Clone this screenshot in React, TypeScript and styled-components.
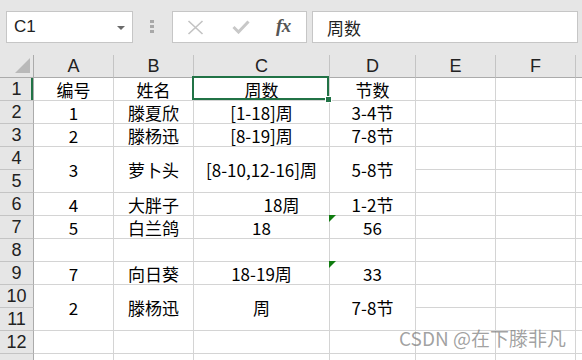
import React from 'react';
import styled, { createGlobalStyle } from 'styled-components';

type Cell = {
  text?: string;
  span?: number;
  shift?: number;
  flag?: boolean;
  selected?: boolean;
};

type Row = {
  label: string;
  cells: Cell[];
  active?: boolean;
};

const COLUMNS = ['A', 'B', 'C', 'D', 'E', 'F', ''];

const ROWS: Row[] = [
  { label: '1', active: true, cells: [{ text: '编号' }, { text: '姓名' }, { text: '周数', selected: true }, { text: '节数' }, {}, {}, {}] },
  { label: '2', cells: [{ text: '1' }, { text: '滕夏欣' }, { text: '[1-18]周' }, { text: '3-4节' }, {}, {}, {}] },
  { label: '3', cells: [{ text: '2' }, { text: '滕杨迅' }, { text: '[8-19]周' }, { text: '7-8节' }, {}, {}, {}] },
  { label: '4', cells: [{ text: '3', span: 2 }, { text: '萝卜头', span: 2 }, { text: '[8-10,12-16]周', span: 2 }, { text: '5-8节', span: 2 }, {}, {}, {}] },
  { label: '5', cells: [{}, {}, {}] },
  { label: '6', cells: [{ text: '4' }, { text: '大胖子' }, { text: '18周', shift: 40 }, { text: '1-2节' }, {}, {}, {}] },
  { label: '7', cells: [{ text: '5' }, { text: '白兰鸽' }, { text: '18' }, { text: '56', flag: true }, {}, {}, {}] },
  { label: '8', cells: [{}, {}, {}, {}, {}, {}, {}] },
  { label: '9', cells: [{ text: '7' }, { text: '向日葵' }, { text: '18-19周' }, { text: '33', flag: true }, {}, {}, {}] },
  { label: '10', cells: [{ text: '2', span: 2 }, { text: '滕杨迅', span: 2 }, { text: '周', span: 2 }, { text: '7-8节', span: 2 }, {}, {}, {}] },
  { label: '11', cells: [{}, {}, {}] },
  { label: '12', cells: [{}, {}, {}, {}, {}, {}, {}] },
  { label: '', cells: [{}, {}, {}, {}, {}, {}, {}] },
];

const GlobalStyle = createGlobalStyle`
  html, body {
    margin: 0;
    padding: 0;
    background: #ffffff;
  }
`;

export default function App() {
  return (
    <Page>
      <GlobalStyle />
      <Toolbar>
        <NameBox>
          <span>C1</span>
          <DropArrow />
        </NameBox>
        <Grip>
          <i />
          <i />
          <i />
        </Grip>
        <FormulaButtons>
          <svg width="17" height="15" viewBox="0 0 17 15">
            <path d="M1.5 1 L15.5 14 M15.5 1 L1.5 14" stroke="#c3c3c3" strokeWidth="1.6" fill="none" />
          </svg>
          <svg width="18" height="14" viewBox="0 0 18 14">
            <path d="M1.5 7 L6.5 12 L16.5 1.5" stroke="#c8c8c8" strokeWidth="3" fill="none" />
          </svg>
          <Fx>fx</Fx>
        </FormulaButtons>
        <FormulaInput>周数</FormulaInput>
      </Toolbar>

      <Sheet>
        <Corner />
        {COLUMNS.map((c, i) => (
          <ColHeader key={i} $last={i === COLUMNS.length - 1}>{c}</ColHeader>
        ))}
        {ROWS.map((row, r) => (
          <React.Fragment key={r}>
            <RowHeader $active={row.active}>{row.label}</RowHeader>
            {row.cells.map((cell, c) => (
              <DataCell
                key={c}
                $span={cell.span}
                $shift={cell.shift}
                $flag={cell.flag}
                $selected={cell.selected}
                $last={c === row.cells.length - 1}
              >
                {cell.text}
              </DataCell>
            ))}
          </React.Fragment>
        ))}
      </Sheet>

      <Watermark>CSDN @在下滕非凡</Watermark>
    </Page>
  );
}

const Page = styled.div`
  position: relative;
  width: 582px;
  height: 360px;
  overflow: hidden;
  background: #ffffff;
`;

const Toolbar = styled.div`
  height: 55px;
  box-sizing: border-box;
  display: flex;
  align-items: flex-start;
  padding: 11px 4px 0 6px;
  background: #e6e6e6;
`;

const NameBox = styled.div`
  width: 127px;
  height: 32px;
  box-sizing: border-box;
  display: flex;
  align-items: center;
  justify-content: space-between;
  padding: 0 7px 0 7px;
  background: #ffffff;
  border: 1px solid #c6c6c6;
  font: 17px 'Liberation Sans', sans-serif;
  color: #222222;
`;

const DropArrow = styled.span`
  width: 0;
  height: 0;
  border-left: 4px solid transparent;
  border-right: 4px solid transparent;
  border-top: 4px solid #6a6a6a;
  margin-top: 2px;
`;

const Grip = styled.div`
  margin: 9px 0 0 17px;
  display: flex;
  flex-direction: column;
  gap: 2px;

  i {
    display: block;
    width: 4px;
    height: 3px;
    background: #a8a8a8;
  }
`;

const FormulaButtons = styled.div`
  margin-left: 18px;
  width: 135px;
  height: 32px;
  box-sizing: border-box;
  display: flex;
  align-items: center;
  gap: 28px;
  padding-left: 14px;
  background: #ffffff;
  border: 1px solid #c6c6c6;
`;

const Fx = styled.span`
  font: italic bold 19px 'Liberation Serif', 'DejaVu Serif', serif;
  color: #555555;
  letter-spacing: -0.5px;
  margin-left: -2px;
  margin-top: -2px;
`;

const FormulaInput = styled.div`
  margin-left: 5px;
  flex: 1;
  height: 32px;
  box-sizing: border-box;
  display: flex;
  align-items: center;
  padding-left: 14px;
  background: #ffffff;
  border: 1px solid #c6c6c6;
  font: 17px 'Noto Sans CJK SC', sans-serif;
  color: #222222;
`;

const Sheet = styled.div`
  display: grid;
  grid-template-columns: 34px 80px 80px 136px 86px 80px 80px 1fr;
  grid-auto-rows: 23px;
  background: #ffffff;
`;

const Corner = styled.div`
  position: relative;
  box-sizing: border-box;
  background: #e6e6e6;
  border-right: 1px solid #ababab;
  border-bottom: 1px solid #ababab;

  &::after {
    content: '';
    position: absolute;
    right: 3px;
    bottom: 4px;
    width: 0;
    height: 0;
    border-left: 15px solid transparent;
    border-bottom: 15px solid #b9b9b9;
  }
`;

const ColHeader = styled.div<{ $last?: boolean }>`
  box-sizing: border-box;
  display: flex;
  align-items: center;
  justify-content: center;
  background: #e6e6e6;
  border-right: ${(p) => (p.$last ? 'none' : '1px solid #c4c4c4')};
  border-bottom: 1px solid #ababab;
  font: 18px 'Liberation Sans', sans-serif;
  color: #222222;
`;

const RowHeader = styled.div<{ $active?: boolean }>`
  box-sizing: border-box;
  display: flex;
  align-items: center;
  justify-content: center;
  background: #e6e6e6;
  border-right: 1px solid #ababab;
  border-bottom: 1px solid #c4c4c4;
  box-shadow: ${(p) => (p.$active ? 'inset -2px 0 0 #217346' : 'none')};
  font: 18px 'Liberation Sans', sans-serif;
  color: #222222;
`;

const DataCell = styled.div<{
  $span?: number;
  $shift?: number;
  $flag?: boolean;
  $selected?: boolean;
  $last?: boolean;
}>`
  position: relative;
  box-sizing: border-box;
  grid-row: ${(p) => (p.$span ? `span ${p.$span}` : 'auto')};
  display: flex;
  align-items: center;
  justify-content: center;
  padding-left: ${(p) => p.$shift || 0}px;
  border-right: ${(p) => (p.$last ? 'none' : '1px solid #d4d4d4')};
  border-bottom: 1px solid #d4d4d4;
  font: 17px 'Noto Sans CJK SC', sans-serif;
  color: #000000;
  white-space: nowrap;
  z-index: ${(p) => (p.$selected ? 2 : 'auto')};

  ${(p) =>
    p.$flag &&
    `
    &::before {
      content: '';
      position: absolute;
      left: -1px;
      top: -1px;
      width: 0;
      height: 0;
      border-top: 7px solid #107c10;
      border-right: 7px solid transparent;
    }
  `}

  ${(p) =>
    p.$selected &&
    `
    &::after {
      content: '';
      position: absolute;
      left: -2px;
      top: -2px;
      right: 0;
      bottom: 0;
      border: 2px solid #217346;
    }
    &::before {
      content: '';
      position: absolute;
      right: -3px;
      bottom: -3px;
      width: 5px;
      height: 5px;
      background: #217346;
      border: 1px solid #ffffff;
      z-index: 3;
    }
  `}
`;

const Watermark = styled.div`
  position: absolute;
  right: 16px;
  bottom: 9px;
  font: 19px 'Noto Sans CJK SC', sans-serif;
  color: rgba(120, 120, 120, 0.7);
`;
